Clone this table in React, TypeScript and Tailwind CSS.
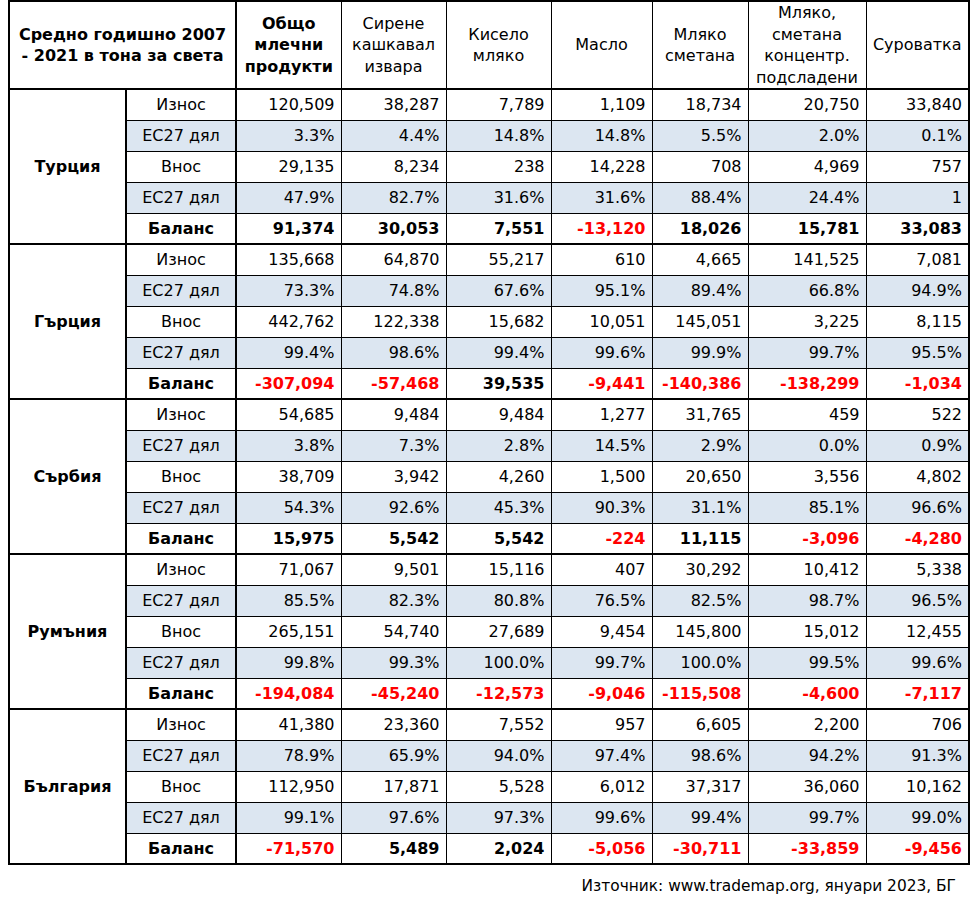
import React from "react";

type Group = {
  country: string;
  rows: string[][]; // Износ, ЕС27, Внос, ЕС27, Баланс
};

const labels = ["Износ", "ЕС27 дял", "Внос", "ЕС27 дял", "Баланс"];

const groups: Group[] = [
  {
    country: "Турция",
    rows: [
      ["120,509", "38,287", "7,789", "1,109", "18,734", "20,750", "33,840"],
      ["3.3%", "4.4%", "14.8%", "14.8%", "5.5%", "2.0%", "0.1%"],
      ["29,135", "8,234", "238", "14,228", "708", "4,969", "757"],
      ["47.9%", "82.7%", "31.6%", "31.6%", "88.4%", "24.4%", "1"],
      ["91,374", "30,053", "7,551", "-13,120", "18,026", "15,781", "33,083"],
    ],
  },
  {
    country: "Гърция",
    rows: [
      ["135,668", "64,870", "55,217", "610", "4,665", "141,525", "7,081"],
      ["73.3%", "74.8%", "67.6%", "95.1%", "89.4%", "66.8%", "94.9%"],
      ["442,762", "122,338", "15,682", "10,051", "145,051", "3,225", "8,115"],
      ["99.4%", "98.6%", "99.4%", "99.6%", "99.9%", "99.7%", "95.5%"],
      ["-307,094", "-57,468", "39,535", "-9,441", "-140,386", "-138,299", "-1,034"],
    ],
  },
  {
    country: "Сърбия",
    rows: [
      ["54,685", "9,484", "9,484", "1,277", "31,765", "459", "522"],
      ["3.8%", "7.3%", "2.8%", "14.5%", "2.9%", "0.0%", "0.9%"],
      ["38,709", "3,942", "4,260", "1,500", "20,650", "3,556", "4,802"],
      ["54.3%", "92.6%", "45.3%", "90.3%", "31.1%", "85.1%", "96.6%"],
      ["15,975", "5,542", "5,542", "-224", "11,115", "-3,096", "-4,280"],
    ],
  },
  {
    country: "Румъния",
    rows: [
      ["71,067", "9,501", "15,116", "407", "30,292", "10,412", "5,338"],
      ["85.5%", "82.3%", "80.8%", "76.5%", "82.5%", "98.7%", "96.5%"],
      ["265,151", "54,740", "27,689", "9,454", "145,800", "15,012", "12,455"],
      ["99.8%", "99.3%", "100.0%", "99.7%", "100.0%", "99.5%", "99.6%"],
      ["-194,084", "-45,240", "-12,573", "-9,046", "-115,508", "-4,600", "-7,117"],
    ],
  },
  {
    country: "България",
    rows: [
      ["41,380", "23,360", "7,552", "957", "6,605", "2,200", "706"],
      ["78.9%", "65.9%", "94.0%", "97.4%", "98.6%", "94.2%", "91.3%"],
      ["112,950", "17,871", "5,528", "6,012", "37,317", "36,060", "10,162"],
      ["99.1%", "97.6%", "97.3%", "99.6%", "99.4%", "99.7%", "99.0%"],
      ["-71,570", "5,489", "2,024", "-5,056", "-30,711", "-33,859", "-9,456"],
    ],
  },
];

const colWidths = [117, 110, 105, 105, 105, 101, 96, 118, 103];

export default function App() {
  return (
    <div
      className="bg-white text-black text-[16px] leading-[21.5px] w-[970px] h-[906px]"
      style={{ fontFamily: "'DejaVu Sans', Verdana, sans-serif" }}
    >
      <table className="ml-[8px] border-collapse table-fixed border-2 border-black w-[960px]">
        <colgroup>
          {colWidths.map((w, i) => (
            <col key={i} style={{ width: w }} />
          ))}
        </colgroup>
        <thead>
          <tr className="h-[87px] border-b-2 border-black">
            <th colSpan={2} className="border-r-2 border-black font-bold text-center align-middle px-1">
              Средно годишно 2007
              <br />- 2021 в тона за света
            </th>
            <th className="border-r border-black font-bold text-center align-middle">
              Общо
              <br />
              млечни
              <br />
              продукти
            </th>
            <th className="border-r border-black font-normal text-center align-middle">
              Сирене
              <br />
              кашкавал
              <br />
              извара
            </th>
            <th className="border-r border-black font-normal text-center align-middle">
              Кисело
              <br />
              мляко
            </th>
            <th className="border-r border-black font-normal text-center align-middle">Масло</th>
            <th className="border-r border-black font-normal text-center align-middle">
              Мляко
              <br />
              сметана
            </th>
            <th className="border-r border-black font-normal text-center align-middle">
              Мляко,
              <br />
              сметана
              <br />
              концентр.
              <br />
              подсладени
            </th>
            <th className="font-normal text-center align-middle">Суроватка</th>
          </tr>
        </thead>
        <tbody>
          {groups.map((g) =>
            g.rows.map((vals, r) => {
              const shaded = r === 1 || r === 3;
              const bal = r === 4;
              return (
                <tr
                  key={g.country + r}
                  className={`h-[31px] ${bal ? "border-b-2" : "border-b"} border-black`}
                >
                  {r === 0 && (
                    <td
                      rowSpan={5}
                      className="border-r-2 border-b-2 border-black font-bold text-center align-middle"
                    >
                      {g.country}
                    </td>
                  )}
                  <td
                    className={`border-r-2 border-black text-center align-middle ${
                      shaded ? "bg-[#dce6f1]" : ""
                    } ${bal ? "font-bold" : ""}`}
                  >
                    {labels[r]}
                  </td>
                  {vals.map((v, c) => (
                    <td
                      key={c}
                      className={`${c < 6 ? "border-r" : ""} border-black text-right align-middle pr-[6px] ${
                        shaded ? "bg-[#dce6f1]" : ""
                      } ${bal ? "font-bold" : ""} ${bal && v.startsWith("-") ? "text-[#ff0000]" : ""}`}
                    >
                      {v}
                    </td>
                  ))}
                </tr>
              );
            })
          )}
        </tbody>
      </table>
      <div className="text-right text-[15.4px] pr-[14px] pt-[11px]">
        Източник: www.trademap.org, януари 2023, БГ
      </div>
    </div>
  );
}
